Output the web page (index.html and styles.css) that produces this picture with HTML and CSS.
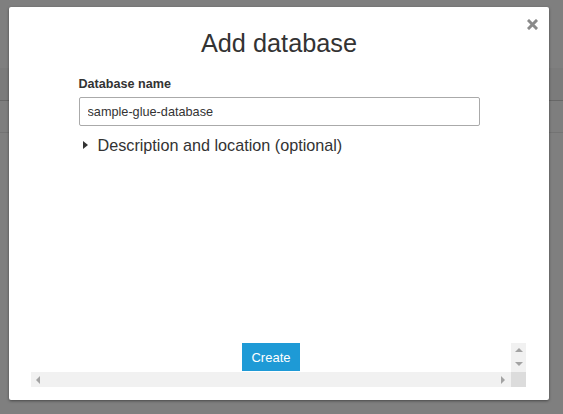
FILE: index.html
```html
<!DOCTYPE html>
<html lang="en">
  <head>
    <meta charset="UTF-8" />
    <meta name="viewport" content="width=device-width, initial-scale=1.0" />
    <title>Add database</title>
    <link rel="stylesheet" href="styles.css">
  </head>
  <body>
    <!-- page behind the overlay -->
    <div class="page">
      <div class="page-top"></div>
      <div class="page-toolbar"></div>
      <div class="page-subbar"></div>
    </div>

    <div class="modal">
      <button class="modal-close" aria-label="Close">
        <svg width="11" height="11" viewBox="0 0 11 11">
          <path d="M2 2 L9 9 M9 2 L2 9" stroke="#8a8a8a" stroke-width="3" stroke-linecap="square" />
        </svg>
      </button>

      <h1 class="modal-title">Add database</h1>

      <form class="db-form">
        <label class="field-label" for="db-name">Database name</label>
        <input id="db-name" class="field-input" type="text" value="sample-glue-database" />

        <div class="expander">
          <span class="caret"></span>
          <span class="expander-text">Description and location (optional)</span>
        </div>
      </form>

      <div class="modal-footer">
        <div class="footer-content">
          <button class="create-btn">Create</button>
        </div>
        <div class="vbar">
          <span class="arrow up"></span>
          <span class="arrow down"></span>
        </div>
        <div class="hbar">
          <span class="arrow left"></span>
          <span class="arrow right"></span>
        </div>
        <div class="corner"></div>
      </div>
    </div>
  </body>
</html>
```

FILE: styles.css
```css
body {
  font-family: "Liberation Sans", Arial, sans-serif;
  margin: 0;
  padding: 0;
  background-color: #7f7f7f;
  color: #333;
}

.page-top {
  height: 68px;
}

.page-toolbar {
  height: 32px;
  background: #7b7b7b;
  border-bottom: 1px solid #676767;
}

.page-subbar {
  height: 31px;
  background: #7e7e7e;
  border-bottom: 1px solid #737373;
}

.modal {
  position: absolute;
  left: 9px;
  top: 7px;
  width: 540px;
  height: 393px;
  background: white;
  border-radius: 2px;
  box-shadow: 0 1px 3px rgba(0, 0, 0, 0.45);
  display: flex;
  flex-direction: column;
  align-items: center;
}

.modal-close {
  position: absolute;
  top: 12px;
  right: 11px;
  padding: 0;
  border: none;
  background: none;
  cursor: pointer;
  line-height: 0;
}

.modal-title {
  margin: 0;
  padding-top: 21px;
  font-size: 25.3px;
  font-weight: normal;
  line-height: 30px;
  color: #333;
}

.db-form {
  width: 401px;
  margin-top: 19px;
  flex: 1;
}

.field-label {
  display: block;
  font-size: 12.6px;
  font-weight: bold;
  line-height: 15px;
  color: #333;
}

.field-input {
  display: block;
  box-sizing: border-box;
  width: 100%;
  height: 29px;
  margin-top: 5px;
  padding: 0 8px;
  border: 1px solid #aaa;
  border-radius: 2px;
  font-family: "Liberation Sans", Arial, sans-serif;
  font-size: 12.7px;
  color: #333;
}

.expander {
  display: flex;
  align-items: center;
  margin-top: 10px;
  cursor: pointer;
}

.caret {
  width: 0;
  height: 0;
  margin-left: 4px;
  margin-right: 10px;
  border-top: 4px solid transparent;
  border-bottom: 4px solid transparent;
  border-left: 5px solid #333;
}

.expander-text {
  font-size: 16.2px;
  line-height: 18px;
}

.modal-footer {
  width: 495px;
  margin-right: 1px;
  margin-bottom: 13px;
  display: grid;
  grid-template-columns: 1fr 15px;
  grid-template-rows: 29px 15px;
}

.footer-content {
  display: flex;
  justify-content: center;
}

.create-btn {
  height: 28px;
  padding: 0 9px;
  border: none;
  background: #1e9ad6;
  color: white;
  font-family: "Liberation Sans", Arial, sans-serif;
  font-size: 13px;
  cursor: pointer;
}

.vbar {
  background: #f1f1f1;
  display: flex;
  flex-direction: column;
  align-items: center;
  justify-content: space-between;
  padding: 5px 0 6px;
  box-sizing: border-box;
}

.hbar {
  background: #f1f1f1;
  display: flex;
  align-items: center;
  justify-content: space-between;
  padding: 0 6px 0 5px;
}

.corner {
  background: #dcdcdc;
}

.arrow {
  width: 0;
  height: 0;
}

.arrow.up {
  border-left: 4px solid transparent;
  border-right: 4px solid transparent;
  border-bottom: 4px solid #a3a3a3;
}

.arrow.down {
  border-left: 4px solid transparent;
  border-right: 4px solid transparent;
  border-top: 4px solid #a3a3a3;
}

.arrow.left {
  border-top: 4px solid transparent;
  border-bottom: 4px solid transparent;
  border-right: 4px solid #a3a3a3;
}

.arrow.right {
  border-top: 4px solid transparent;
  border-bottom: 4px solid transparent;
  border-left: 4px solid #a3a3a3;
}
```
